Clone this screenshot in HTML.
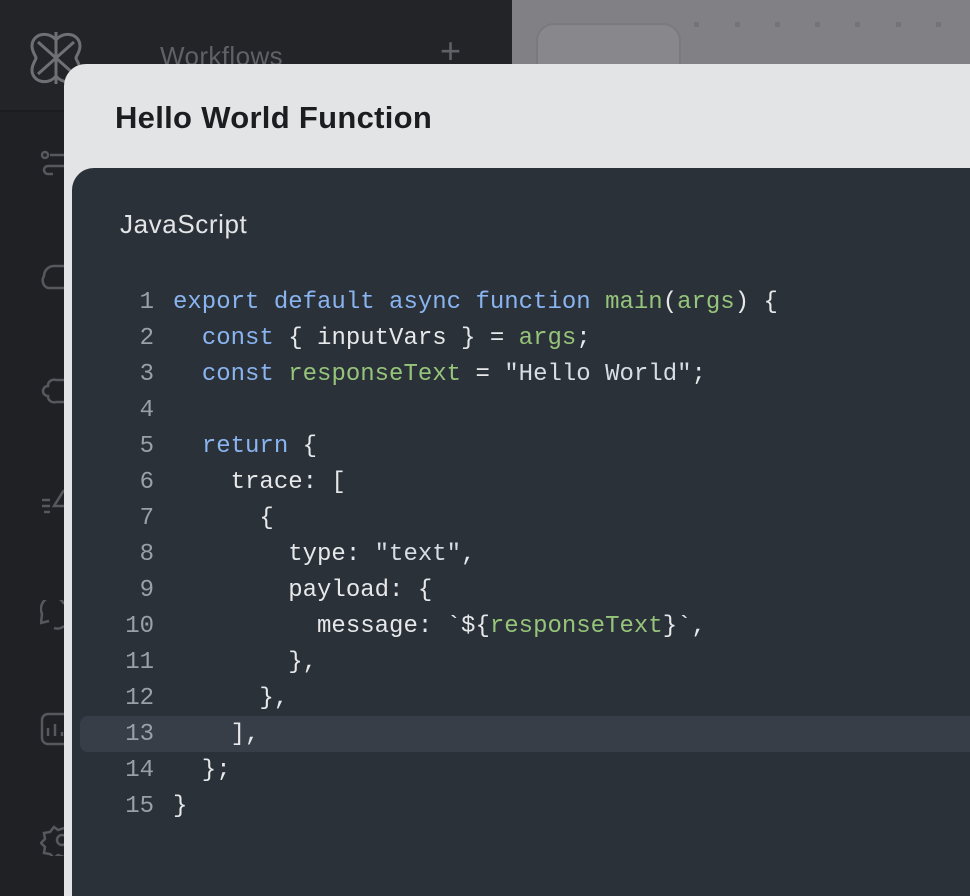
<!DOCTYPE html>
<html><head><style>
*{margin:0;padding:0;box-sizing:border-box}
html,body{width:970px;height:896px;overflow:hidden}
body{position:relative;background:#818185;font-family:"Liberation Sans",sans-serif}
.rail{position:absolute;left:0;top:0;width:112px;height:896px;background:#1f2125}
.rail .top{height:112px;background:#232428;border-bottom:2px solid #1b1c1f}
.side{position:absolute;left:112px;top:0;width:400px;height:896px;background:#232428}
.wf{position:absolute;left:160px;top:41px;color:#5f6166;font-size:26px;letter-spacing:0.4px}
.plus{position:absolute;left:440px;top:30px;color:#5f6166;font-size:36px}
.card{position:absolute;left:536px;top:23px;width:145px;height:60px;border:2px solid #7a7a7e;border-radius:18px;background:#88888c}
.dot{position:absolute;width:5px;height:5px;background:#747478}
.modal{position:absolute;left:64px;top:64px;width:906px;height:832px;background:#e3e4e6;border-radius:22px 0 0 0}
.title{position:absolute;left:115px;top:100px;font-size:31px;font-weight:bold;color:#1c1d20;letter-spacing:0.3px}
.code{position:absolute;left:72px;top:168px;width:898px;height:728px;background:#2b3139;border-radius:22px 0 0 0}
.lang{position:absolute;left:120px;top:209px;font-size:26px;color:#e3e4e6;letter-spacing:0.6px}
.hl{position:absolute;left:80px;top:716px;width:890px;height:36px;background:#373e47;border-radius:8px 0 0 8px}
pre{position:absolute;left:112px;top:285px;font-family:"Liberation Mono",monospace;font-size:24px;line-height:36px;color:#e6e8ea}
.n{display:inline-block;width:42px;text-align:right;color:#9aa0a8;margin-right:19px}
.k{color:#89b4f0}.g{color:#95c47a}.s{color:#d5dde5}
</style></head><body>
<div class="rail"><div class="top"></div>
<svg style="position:absolute;left:24px;top:30px" width="64" height="56" viewBox="0 0 64 56" fill="none" stroke="#6e7075" stroke-width="3"><path d="M32 10C24 0 8 4 8 16c0 6 4 10 4 12s-4 6-4 12c0 12 16 16 24 6 8 10 24 6 24-6 0-6-4-10-4-12s4-6 4-12C56 4 40 0 32 10z"/><path d="M32 2V54M14 12L50 44M50 12L14 44"/></svg>
<svg style="position:absolute;left:40px;top:150px" width="30" height="30" fill="none" stroke="#55585d" stroke-width="2.5"><circle cx="5" cy="5" r="3"/><path d="M10 5H28M28 16H8a4 4 0 0 0 0 8h5"/></svg>
<svg style="position:absolute;left:40px;top:262px" width="24" height="30" fill="none" stroke="#55585d" stroke-width="2.5"><path d="M24 4H14a10 10 0 0 0-10 10 8 8 0 0 0 4 12h16"/></svg>
<svg style="position:absolute;left:40px;top:376px" width="24" height="30" fill="none" stroke="#55585d" stroke-width="2.5"><path d="M24 4h-8a6 6 0 0 0-8 6 5 5 0 0 0 0 10 6 6 0 0 0 8 6h8"/></svg>
<svg style="position:absolute;left:40px;top:488px" width="24" height="30" fill="none" stroke="#55585d" stroke-width="2.5"><path d="M2 12h8M2 18h8M4 24h6M24 2L14 18h10"/></svg>
<svg style="position:absolute;left:40px;top:600px" width="24" height="30" fill="none" stroke="#55585d" stroke-width="2.5"><path d="M24 4a12 12 0 0 0-22 10l-1 9 8-2M24 26a10 10 0 0 1-10 2"/></svg>
<svg style="position:absolute;left:40px;top:712px" width="24" height="36" fill="none" stroke="#55585d" stroke-width="2.5"><path d="M24 2H8a6 6 0 0 0-6 6v18a6 6 0 0 0 6 6h16M8 24v-8M15 24v-12M22 24v-4"/></svg>
<svg style="position:absolute;left:40px;top:824px" width="24" height="32" fill="none" stroke="#55585d" stroke-width="2.5"><path d="M24 4l-6 2-4-3-4 5-6 1 1 6-4 4 4 4-1 6 6 1 4 4 4-3 6 2"/><circle cx="22" cy="16" r="5"/></svg>
</div>
<div class="side"></div>
<div class="wf">Workflows</div><div class="plus">+</div>
<div class="card"></div>
<div class="dot" style="left:694px;top:22px"></div><div class="dot" style="left:735px;top:22px"></div><div class="dot" style="left:775px;top:22px"></div><div class="dot" style="left:815px;top:22px"></div><div class="dot" style="left:855px;top:22px"></div><div class="dot" style="left:896px;top:22px"></div><div class="dot" style="left:936px;top:22px"></div>
<div class="modal"></div>
<div class="title">Hello World Function</div>
<div class="code"></div>
<div class="lang">JavaScript</div>
<div class="hl"></div>
<pre><span class="n">1</span><span class="k">export default async function</span> <span class="g">main</span>(<span class="g">args</span>) {
<span class="n">2</span>  <span class="k">const</span> { inputVars } = <span class="g">args</span>;
<span class="n">3</span>  <span class="k">const</span> <span class="g">responseText</span> = <span class="s">"Hello World"</span>;
<span class="n">4</span>
<span class="n">5</span>  <span class="k">return</span> {
<span class="n">6</span>    trace: [
<span class="n">7</span>      {
<span class="n">8</span>        type: <span class="s">"text"</span>,
<span class="n">9</span>        payload: {
<span class="n">10</span>          message: `${<span class="g">responseText</span>}`,
<span class="n">11</span>        },
<span class="n">12</span>      },
<span class="n">13</span>    ],
<span class="n">14</span>  };
<span class="n">15</span>}
</pre>
</body></html>
